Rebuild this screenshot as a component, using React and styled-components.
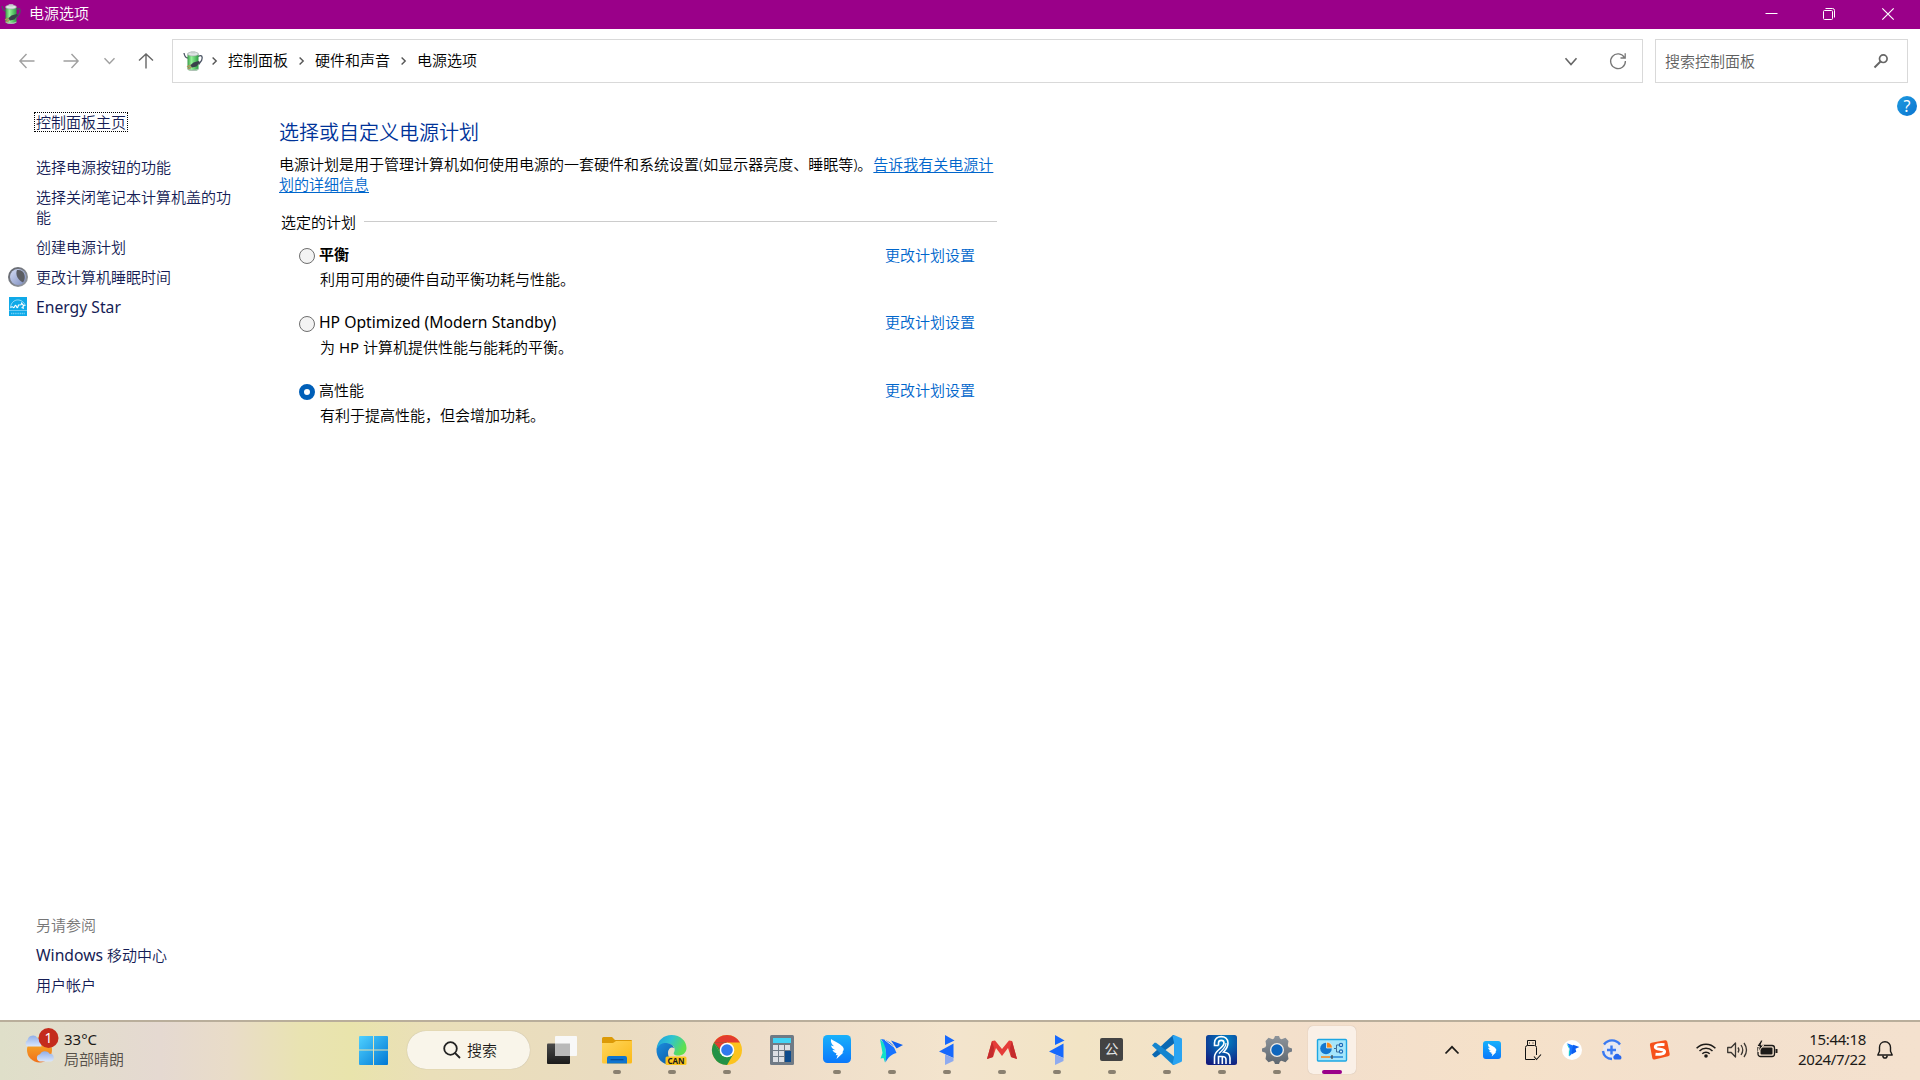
import React from 'react';
import styled, { createGlobalStyle } from 'styled-components';

const GlobalStyle = createGlobalStyle`
  * { box-sizing: border-box; }
  html, body { margin: 0; padding: 0; background: #fff; overflow: hidden; }
  body {
    font-family: "Noto Sans", "Noto Sans CJK SC", sans-serif;
    font-size: 15px;
    font-weight: 350;
    line-height: 20px;
    color: #000;
  }
  svg { display: block; flex: none; overflow: visible; }
`;

const Desktop = styled.div`
  width: 1920px;
  height: 1080px;
  display: flex;
  flex-direction: column;
  background: #fff;
  overflow: hidden;
  white-space: nowrap;
`;

/* ---------- title bar ---------- */
const TitleBar = styled.header`
  height: 29px;
  flex: none;
  display: flex;
  align-items: center;
  padding-left: 1px;
  padding-bottom: 1px;
  background: #9a0089;
  color: #fff;
`;
const TitleText = styled.span`
  margin-left: 8px;
  flex: 1;
  padding-bottom: 2px;
`;
const WindowButton = styled.div`
  width: 58px;
  height: 28px;
  display: flex;
  align-items: center;
  justify-content: center;
`;
const WindowButtons = styled.div`
  display: flex;
  margin-right: 3px;
`;

/* ---------- navigation ---------- */
const NavBar = styled.nav`
  height: 64px;
  flex: none;
  display: flex;
  align-items: center;
  padding: 0 12px 0 19px;
`;
const NavButtons = styled.div`
  width: 153px;
  flex: none;
  display: flex;
  align-items: center;
`;
const NavButton = styled.div`
  width: 16px;
  margin-right: ${(p) => p.$gap}px;
  display: flex;
  justify-content: center;
`;
const AddressBox = styled.div`
  width: 1471px;
  flex: none;
  height: 44px;
  border: 1px solid #d9d9d9;
  display: flex;
  align-items: center;
  padding: 0 16px 0 10px;
`;
const Crumbs = styled.div`
  flex: 1;
  display: flex;
  align-items: center;
  margin-left: 9px;
`;
const Crumb = styled.span`
  margin: 0 11px 2px 11px;
`;
const AddressActions = styled.div`
  display: flex;
  align-items: center;
  gap: 33px;
`;
const SearchBox = styled.div`
  width: 253px;
  flex: none;
  height: 44px;
  margin-left: 12px;
  border: 1px solid #d9d9d9;
  display: flex;
  align-items: center;
  justify-content: space-between;
  padding: 0 19px 0 9px;
  color: #5f5f5f;
`;

/* ---------- body ---------- */
const Body = styled.div`
  flex: 1;
  display: flex;
  min-height: 0;
`;
const Sidebar = styled.aside`
  width: 279px;
  flex: none;
  display: flex;
  flex-direction: column;
  padding: 19px 40px 25px 8px;
  color: #151c55;
`;
const HomeLink = styled.a`
  align-self: flex-start;
  margin: 0 0 25px 26px;
  height: 20px;
  line-height: 18px;
  padding: 0 1px;
  border: 1px dotted #000;
`;
const TaskList = styled.div`
  display: flex;
  flex-direction: column;
  gap: 10px;
`;
const Task = styled.a`
  display: flex;
  align-items: flex-start;
  white-space: normal;
`;
const TaskIcon = styled.span`
  width: 28px;
  height: 20px;
  flex: none;
`;
const TaskText = styled.span`
  flex: none;
  width: 198px;
`;
const Latin = styled.span`
  font-size: ${(p) => p.$size || 15.7}px;
  font-weight: 400;
`;
const SeeAlso = styled.div`
  margin-top: auto;
  padding-left: 28px;
  display: flex;
  flex-direction: column;
  gap: 10px;
`;
const SeeAlsoTitle = styled.span`
  color: #777;
`;
const Main = styled.main`
  width: 719px;
  flex: none;
  padding-top: 26px;
`;
const Heading = styled.h1`
  margin: 0 0 7px;
  font-size: 20px;
  line-height: 28px;
  font-weight: 350;
  color: #003399;
`;
const Intro = styled.p`
  margin: 0;
  white-space: normal;
  word-break: break-all;
`;
const HelpLink = styled.a`
  margin-left: 1px;
  color: #0066cc;
  text-decoration: underline;
  text-underline-offset: 2px;
  text-decoration-thickness: 1px;
`;
const Legend = styled.div`
  display: flex;
  align-items: center;
  margin: 18px 0 12px 2px;
`;
const LegendRule = styled.span`
  flex: 1;
  height: 1px;
  margin: 0 1px 1px 8px;
  background: #cccccc;
`;
const Plan = styled.div`
  display: flex;
  height: 68px;
  padding-left: 20px;
`;
const Radio = styled.span`
  width: 16px;
  height: 16px;
  margin: 4px 4px 0 0;
  flex: none;
  border-radius: 50%;
  border: ${(p) => (p.$checked ? '5px solid #005fb8' : '1px solid #6e6e6e')};
  background: ${(p) => (p.$checked ? '#fff' : '#f3f3f3')};
`;
const PlanText = styled.div`
  flex: 1;
  display: flex;
  flex-direction: column;
  gap: 5px;
`;
const PlanName = styled.span`
  height: 20px;
  font-weight: ${(p) => (p.$bold ? 700 : 350)};
`;
const PlanDescription = styled.span`
  padding-left: 1px;
`;
const PlanLink = styled.a`
  margin-right: 23px;
  padding-top: ${(p) => (p.$bold ? 1 : 0)}px;
  color: #0066cc;
`;
const HelpArea = styled.div`
  flex: 1;
  display: flex;
  justify-content: flex-end;
  padding: 3px 3px 0 0;
`;
const HelpBadge = styled.span`
  width: 20px;
  height: 20px;
  border-radius: 50%;
  background: linear-gradient(135deg, #1e9be0, #0a74d0);
  color: #fff;
  text-align: center;
  font-size: 16px;
  font-weight: 400;
  line-height: 20px;
`;

/* ---------- taskbar ---------- */
const Taskbar = styled.footer`
  height: 60px;
  flex: none;
  display: flex;
  align-items: center;
  border-top: 2px solid #b9ae9b;
  background: linear-gradient(90deg, #dfdfc9 0, #e3dccd 90px, #e5d9d1 160px, #e9dcc8 230px,
    #e9e3b2 300px, #e9e4ac 350px, #eadfb9 430px, #eadcc0 600px, #eeddc9 760px, #f3e4cd 950px,
    #f2e4c5 1080px, #f3e2c9 1200px, #f3dfcc 1330px, #f5e1c9 1500px, #f3e0cd 1700px, #f4e1ce 1920px);
  color: #1c1a18;
`;
const Weather = styled.div`
  width: 346px;
  padding: 0 0 4px 24px;
  display: flex;
  align-items: center;
`;
const WeatherText = styled.div`
  display: flex;
  flex-direction: column;
  margin-left: 9px;
  color: #554f48;
`;
const Temperature = styled.span`
  color: #1c1a18;
  font-weight: 400;
`;
const AppButton = styled.div`
  width: 55px;
  height: 58px;
  display: flex;
  flex-direction: column;
  align-items: center;
`;
const AppTile = styled.div`
  width: 48px;
  height: 48px;
  margin-top: 4px;
  border-radius: 5px;
  display: flex;
  flex-direction: column;
  align-items: center;
  justify-content: space-between;
  padding-top: 9px;
  background: ${(p) => (p.$active ? '#faf0e7' : 'transparent')};
  box-shadow: ${(p) => (p.$active ? '0 0 1px rgba(0,0,0,.25)' : 'none')};
`;
const Indicator = styled.span`
  width: ${(p) => (p.$active ? 20 : 8)}px;
  height: 4px;
  border-radius: 2px;
  background: ${(p) => (p.$active ? '#9a0089' : p.$open ? '#8a8070' : 'transparent')};
`;
const SearchPill = styled.div`
  width: 123px;
  height: 38px;
  margin: 0 4px 2px 6px;
  border-radius: 19px;
  background: #f9f5ea;
  box-shadow: 0 0 1px rgba(0, 0, 0, 0.25);
  display: flex;
  align-items: center;
  justify-content: center;
  gap: 6px;
  padding-left: 3px;
`;
const Tray = styled.div`
  margin-left: auto;
  display: flex;
  align-items: center;
  padding: 0 27px 2px 0;
`;
const TraySlot = styled.span`
  width: ${(p) => p.$w}px;
  display: flex;
  justify-content: center;
`;
const Clock = styled.div`
  width: 78px;
  display: flex;
  flex-direction: column;
  align-items: flex-end;
  margin-right: 11px;
  padding-bottom: 2px;
  font-weight: 400;
  letter-spacing: -0.35px;
`;

/* ---------- small icons ---------- */
const PowerIcon = ({ id }) => (
  <svg width="20" height="20" viewBox="0 0 20 20">
    <defs>
      <linearGradient id={id} x1="0" x2="1">
        <stop offset="0" stopColor="#3a9a48" />
        <stop offset=".35" stopColor="#93f396" />
        <stop offset="1" stopColor="#2c9c42" />
      </linearGradient>
    </defs>
    <path d="M15 5.500c4-2 5 0 3.600 4l-3 4M5 7C2.500 7 1.500 5 1 2" fill="none" stroke="#4c5564" strokeWidth="1.300" />
    <rect x="4.500" y="2" width="11" height="17.500" rx="2" fill={`url(#${id})`} />
    <ellipse cx="10" cy="3" rx="5.500" ry="2" fill="#dfe5e4" stroke="#96a19d" strokeWidth=".6" />
    <rect x="7.500" y=".3" width="5" height="2.200" rx="1" fill="#c6cecb" />
    <path d="M4.500 17.500q5.500 2.500 11 0v1q-5.500 3-11 0z" fill="#aebdb5" />
    <path d="M7 14.500l3.500-3 5-1.500 1.500 1-3.500 4.500-4.500 1z" fill="#39404a" />
    <path d="M4 15.800l3.500-1.600M5 17.800l3.500-1.600" stroke="#b3925b" strokeWidth="1.300" />
  </svg>
);

const Arrow = ({ rotate = 0, color }) => (
  <svg width="16" height="16" viewBox="0 0 16 16" fill="none" stroke={color} strokeWidth="1.400">
    <path transform={`rotate(${rotate} 8 8)`} d="M15.500 8H1M7.500 1L.9 8l6.600 7" />
  </svg>
);
const Chevron = ({ w = 12, h = 6, color = '#555', sw = 1.400, up = false }) => (
  <svg width={w} height={h} viewBox={`0 0 ${w} ${h}`} fill="none" stroke={color} strokeWidth={sw}>
    <path d={up ? `M.5 ${h - 0.5}L${w / 2} .8L${w - 0.5} ${h - 0.5}` : `M.5 .3L${w / 2} ${h - 0.5}L${w - 0.5} .3`} />
  </svg>
);
const CrumbChevron = () => (
  <svg width="5" height="8" viewBox="0 0 5 8" fill="none" stroke="#555" strokeWidth="1.400">
    <path d="M.6 .5L4.200 4L.6 7.500" />
  </svg>
);

const Moon = () => (
  <svg width="20" height="20" viewBox="0 0 20 20">
    <defs>
      <linearGradient id="moonRing" x1="0" y1="0" x2="1" y2="1">
        <stop offset="0" stopColor="#5c5f66" />
        <stop offset="1" stopColor="#9ba0a8" />
      </linearGradient>
      <linearGradient id="moonFace" x1="0" y1="0" x2="1" y2="1">
        <stop offset="0" stopColor="#d4dcf3" />
        <stop offset="1" stopColor="#7c8cc0" />
      </linearGradient>
    </defs>
    <circle cx="10" cy="10" r="10" fill="url(#moonRing)" />
    <circle cx="10" cy="10" r="8" fill="url(#moonFace)" />
    <path d="M9 3C7 8 10 13 15 15.500 18.500 11 17 2 9 3z" fill="#5b5d63" />
  </svg>
);
const EnergyStarBox = styled.svg`
  margin-left: 1px;
`;
const EnergyStar = () => (
  <EnergyStarBox width="18" height="19" viewBox="0 0 18 19">
    <rect width="18" height="19" fill="#0fa9e8" />
    <path d="M1.500 10C3 .8 14 .8 16.500 9" fill="none" stroke="#b4e5fa" strokeWidth=".8" />
    <path d="M1.500 11q1.500-2 2.500-.8t1.800-1 1.700.5 2-1.700l2.500-.3.800-1.700.8 1.700 1.700.5-1.300 1.300.3 1.700-1.800-.8" fill="none" stroke="#fff" strokeWidth="1.100" />
    <path d="M0 13.500h18" stroke="#a9e2fa" strokeWidth=".6" />
    <path d="M2 16.500h14" stroke="#6fd0f6" strokeWidth="1.300" strokeDasharray="1.200 .6" />
  </EnergyStarBox>
);

/* ---------- taskbar icons ---------- */
const WeatherIcon = () => (
  <svg width="31" height="31" viewBox="0 0 31 31">
    <defs>
      <linearGradient id="sun" x1="0" y1="0" x2="0" y2="1">
        <stop offset="0" stopColor="#f7b52c" />
        <stop offset="1" stopColor="#f0701a" />
      </linearGradient>
      <linearGradient id="cloud" x1="0" y1="0" x2="0" y2="1">
        <stop offset="0" stopColor="#8faee8" />
        <stop offset="1" stopColor="#dbe7fb" />
      </linearGradient>
    </defs>
    <circle cx="15.500" cy="16" r="12.500" fill="url(#sun)" />
    <path d="M3.500 12.500a3.400 3.400 0 0 1 0-6.200A5.500 5.500 0 0 1 13.500 4q4 .5 4 8.500z" fill="url(#cloud)" />
    <path d="M16 27.500a3.700 3.700 0 0 1 0-7.300 5.500 5.500 0 0 1 9.500-.5 4 4 0 0 1 1.500 7.800z" fill="url(#cloud)" />
    <circle cx="24.500" cy="4" r="10" fill="#c42b1c" />
    <text x="24.500" y="9" textAnchor="middle" fontSize="14" fontWeight="400" fill="#fff">1</text>
  </svg>
);
const WindowsLogo = () => (
  <svg width="29" height="30" viewBox="0 0 29 30">
    <defs>
      <linearGradient id="win" x1="0" y1="0" x2="1" y2="1">
        <stop offset="0" stopColor="#4fd1ff" />
        <stop offset="1" stopColor="#0078d4" />
      </linearGradient>
    </defs>
    <path d="M1 1h13v13.500H0V2a1 1 0 0 1 1-1zM15 1h13a1 1 0 0 1 1 1v12.500H15zM0 15.500h14V30H1a1 1 0 0 1-1-1zM15 15.500h14V29a1 1 0 0 1-1 1H15z" fill="url(#win)" />
  </svg>
);
const TaskViewIcon = () => (
  <svg width="30" height="30" viewBox="0 0 30 30">
    <defs>
      <linearGradient id="tvDark" x1="0" y1="0" x2="0" y2="1">
        <stop offset="0" stopColor="#4a4a4a" /><stop offset="1" stopColor="#1b1b1b" />
      </linearGradient>
    </defs>
    <rect x="0" y="8.500" width="23" height="20.500" rx="1" fill="url(#tvDark)" />
    <rect x="8" y="1" width="22" height="20" rx="1" fill="#f8f8f8" />
    <path d="M8 8.500h15V21H9a1 1 0 0 1-1-1z" fill="#b9b9b9" />
  </svg>
);
const FolderIcon = () => (
  <svg width="30" height="30" viewBox="0 0 30 30">
    <defs>
      <linearGradient id="fold" x1="0" y1="0" x2="1" y2="1">
        <stop offset="0" stopColor="#ffd65c" /><stop offset="1" stopColor="#fbb917" />
      </linearGradient>
    </defs>
    <path d="M0 3.500A1.500 1.500 0 0 1 1.500 2H10l3 3h16a1 1 0 0 1 1 1v5H0z" fill="#dc9a07" />
    <path d="M0 8h11l3-2h16v21a1.500 1.500 0 0 1-1.500 1.500h-27A1.500 1.500 0 0 1 0 27z" fill="url(#fold)" />
    <path d="M5 28.500V23a2 2 0 0 1 2-2h16a2 2 0 0 1 2 2v5.500z" fill="#0f74cf" />
    <path d="M8.500 24.700h13" stroke="#0a4a94" strokeWidth="1.200" />
  </svg>
);
const EdgeIcon = () => (
  <svg width="31" height="30" viewBox="0 0 31 30">
    <defs>
      <linearGradient id="edgeTop" x1="0" y1="0" x2="1" y2=".4">
        <stop offset="0" stopColor="#1d9be0" /><stop offset=".5" stopColor="#2fc3d0" /><stop offset="1" stopColor="#5fe04e" />
      </linearGradient>
      <linearGradient id="edgeLow" x1="0" y1="0" x2="1" y2="1">
        <stop offset="0" stopColor="#1a8ddd" /><stop offset="1" stopColor="#0c4f9c" />
      </linearGradient>
    </defs>
    <path d="M.5 14C1.500 5 8 0 15.500 0 24.500 0 30.500 6 30.500 13c0 5-4 7.500-8.500 7.500-3.500 0-5-1.500-4-3 2.500-4.500-1.500-9-7-9-4.500 0-8 2-10.500 5.500z" fill="url(#edgeTop)" />
    <path d="M.5 14C3 9 7 7.700 10.500 8c4.500.3 7 3 7.500 5-2-1.500-6 0-6 5 0 7 7 10 13.500 7.500C23 29 19 30 15.500 30 6 30 0 23 .5 14z" fill="url(#edgeLow)" />
    <rect x="9.500" y="21.500" width="21" height="8.500" rx="1.500" fill="#fbc51d" />
    <text x="20" y="28.600" textAnchor="middle" fontSize="8" fontWeight="700" fill="#1b1b1b">CAN</text>
  </svg>
);
const ChromeIcon = () => (
  <svg width="30" height="30" viewBox="0 0 30 30">
    <circle cx="15" cy="15" r="15" fill="#fcc31e" />
    <path d="M15 15L2 7.500A15 15 0 0 1 28 7.500H15z" fill="#e33b2e" />
    <path d="M2 7.500A15 15 0 0 0 15 30l6.500-11.300L8.500 18.700z" fill="#239246" />
    <path d="M2 7.500L8.500 18.700 15 7.500z" fill="#239246" />
    <path d="M2 7.500L8.500 15 15 7.500z" fill="#e33b2e" />
    <circle cx="15" cy="15" r="7.300" fill="#fff" />
    <circle cx="15" cy="15" r="5.800" fill="#3079ee" />
  </svg>
);
const CalcIcon = () => (
  <svg width="24" height="30" viewBox="0 0 24 30">
    <rect width="24" height="30" rx="1.500" fill="#6f7a85" />
    <rect x="3" y="3" width="18" height="5" fill="#41d3f5" />
    {[10, 16, 22].map((y) => [3, 9, 15].map((x) => (
      <rect key={`${x}-${y}`} x={x} y={y} width="5" height="5" fill="#dcdfe4" />
    )))}
    <rect x="15" y="16" width="6" height="11" fill="#0c4a8c" />
  </svg>
);
const DingTalk = ({ size, id }) => (
  <svg width={size} height={size} viewBox="0 0 28 28">
    <defs>
      <linearGradient id={id} x1="0" y1="0" x2="0" y2="1">
        <stop offset="0" stopColor="#18b1fb" /><stop offset="1" stopColor="#0a78fb" />
      </linearGradient>
    </defs>
    <rect width="28" height="28" rx="4.500" fill={`url(#${id})`} />
    <path d="M8 4C13 7.500 18.500 9 20.500 13c.7 1.500-.3 3-1.300 4.500h1.300L13.500 24l1.200-4-2 .2.800-2C11.500 18 10 16.500 9.500 15l3 .3C9.500 14 8.500 12.500 8 10.500l3 .8C8.500 9.500 7.500 7 8 4z" fill="#fff" />
  </svg>
);
const BirdShape = () => (
  <>
    <path d="M0 3.500l4.500 4.800L4 26l4-2.500L5 14z" fill="#12dbc8" />
    <path d="M1 3l12 4.500L10 21 5 27C7.500 18 6 10 1 3z" fill="#1673ff" />
    <path d="M12 6l11 4-7 3 1.500 5.500L9 23l1-9z" fill="#0d5ff0" />
  </>
);
const BirdIcon = () => (
  <svg width="23" height="30" viewBox="0 0 23 30">
    <path d="M0 4l5 5 1.500 14-1.500 4.500-1.500-4.500-3 .5L2.500 18z" fill="#12e0c8" />
    <path d="M1 4c4 .5 8 2 12 6l3.500 8c-5 1-8.500 4.500-11 9.500C7 19 6 10 1 4z" fill="#1673ff" />
    <path d="M11 5.500L23 10l-6.500 3.500z" fill="#0d5ff0" />
    <path d="M5 5l11.500 9" fill="none" stroke="#f1e1cc" strokeWidth="1" />
  </svg>
);
const FlagIcon = () => (
  <svg width="15" height="30" viewBox="0 0 15 30">
    <path d="M6 0l9.500 5.500L6 10z" fill="#1568fd" />
    <path d="M14.500 8.500V23L0 16.500z" fill="#1568fd" />
    <path d="M6 19.500l8.500 3.500v3L6 30z" fill="#8fabef" />
  </svg>
);
const MIcon = () => (
  <svg width="30" height="30" viewBox="0 0 30 30">
    <path d="M0 24L5 6l3-.5 7 8.500 7-8.500 3 .5 5 18-6-2-3-9-6 8-6-8-3 9z" fill="#e53c39" />
    <path d="M0 24l5-18 2 7-1 9zM30 24L25 6l-2 7 1 9z" fill="#c42b2c" />
  </svg>
);
const GongTile = styled.span`
  width: 23px;
  height: 23px;
  margin: 3px 0 4px;
  border-radius: 2px;
  background: #434343;
  color: #e4e4e4;
  font-size: 14px;
  font-weight: 400;
  line-height: 22px;
  text-align: center;
`;
const VsCodeIcon = () => (
  <svg width="30" height="30" viewBox="0 0 30 30">
    <path d="M0 19.500l2.500 2.700h1.500L22 8.500V0h-1z" fill="#0a68b2" />
    <path d="M0 10.500l2.500-2.700h1.500L22 21.500V30h-1z" fill="#1485cf" />
    <path d="M22 0l7 3a1.500 1.500 0 0 1 1 1.500v21a1.500 1.500 0 0 1-1 1.500l-7 3-1.500-1 1.500-6.500v-15L20.500 1z" fill="#2aa4f2" />
  </svg>
);
const BlueAppIcon = () => (
  <svg width="31" height="30" viewBox="0 0 31 30">
    <defs>
      <radialGradient id="nav" cx=".6" cy=".2" r=".9">
        <stop offset="0" stopColor="#0086c9" /><stop offset="1" stopColor="#131b7d" />
      </radialGradient>
    </defs>
    <rect width="31" height="30" rx="2.500" fill="url(#nav)" />
    <g fill="none" stroke="#fff" strokeWidth="1.600">
      <path d="M12.500 10.500H8.500V8c0-8.500 13.500-8.500 13.500 0 0 4-1.500 6-4.500 9 4.500.5 6.500 2.500 6.500 6v6" />
      <path d="M12.500 10.500V8c0-3.500 5.500-3.500 5.500 0 0 5-9.500 7-9.500 14v7" />
      <path d="M20 8c0 5-4 7-7 10.500" strokeWidth="1.200" />
      <path d="M12.500 29v-7.500h3.500c3 0 4 1 4 3V29M16.300 29v-7" />
    </g>
  </svg>
);
const GearIcon = () => (
  <svg width="30" height="30" viewBox="0 0 30 30">
    <defs>
      <linearGradient id="gear" x1="0" y1="0" x2="0" y2="1">
        <stop offset="0" stopColor="#8d949b" /><stop offset="1" stopColor="#5f676f" />
      </linearGradient>
    </defs>
    <path d="M6.500 2.800l4 1.500 1.500-.8L13 1h4l1 2.500 1.500.8 4-1.500L26.500 6l-.7 4.300.8 1.900L30 13.500v3l-3.400 1.300-.8 1.900.7 4.300-3 3.200-4-1.500-1.500.8L17 29h-4l-1-2.500-1.500-.8-4 1.500L3.500 24l.7-4.300-.8-1.900L0 16.500v-3l3.400-1.300.8-1.900L3.500 6z" fill="url(#gear)" />
    <circle cx="15" cy="15" r="7" fill="#f3eee8" />
    <circle cx="15" cy="15" r="5.700" fill="#0f66bd" />
  </svg>
);
const ControlPanelIcon = () => (
  <svg width="30" height="30" viewBox="0 0 30 30">
    <rect x=".5" y="4.500" width="29" height="21.500" rx="1" fill="#a5e6fb" stroke="#1da6e3" strokeWidth="1.400" />
    <circle cx="9" cy="13.500" r="5.800" fill="#1377cf" />
    <path d="M9.500 13V7a6 6 0 0 1 6 6z" fill="#f58a1d" stroke="#d8f4fd" strokeWidth=".8" />
    <path d="M17 13.500h2.500v-3.500H22M19.500 13.500V17H22" fill="none" stroke="#3d6f9a" strokeWidth="1" />
    <circle cx="24" cy="10" r="1.600" fill="#d8f4fd" stroke="#1b69b8" strokeWidth="1.200" />
    <circle cx="24" cy="16.500" r="1.600" fill="#d8f4fd" stroke="#1b69b8" strokeWidth="1.200" />
    <path d="M4 22h9" stroke="#f58a1d" strokeWidth="1.600" />
    <path d="M13 22h13" stroke="#1377cf" strokeWidth="1.300" />
    <path d="M15 20v4" stroke="#444" strokeWidth="1.200" />
  </svg>
);

const apps = [
  { icon: <TaskViewIcon />, open: false },
  { icon: <FolderIcon />, open: true },
  { icon: <EdgeIcon />, open: true },
  { icon: <ChromeIcon />, open: true },
  { icon: <CalcIcon />, open: false },
  { icon: <DingTalk size={28} id="dingApp" />, open: true },
  { icon: <BirdIcon />, open: true },
  { icon: <FlagIcon />, open: true },
  { icon: <MIcon />, open: true },
  { icon: <FlagIcon />, open: true },
  { icon: <GongTile>公</GongTile>, open: true },
  { icon: <VsCodeIcon />, open: true },
  { icon: <BlueAppIcon />, open: true },
  { icon: <GearIcon />, open: true },
  { icon: <ControlPanelIcon />, open: true, active: true },
];

const plans = [
  { name: '平衡', description: '利用可用的硬件自动平衡功耗与性能。', bold: true },
  {
    name: <Latin>HP Optimized (Modern Standby)</Latin>,
    description: <>为 <Latin $size={15}>HP</Latin> 计算机提供性能与能耗的平衡。</>,
  },
  { name: '高性能', description: '有利于提高性能，但会增加功耗。', checked: true },
];

const tasks = [
  { text: '选择电源按钮的功能' },
  { text: '选择关闭笔记本计算机盖的功能' },
  { text: '创建电源计划' },
  { text: '更改计算机睡眠时间', icon: <Moon /> },
  { text: <Latin>Energy Star</Latin>, icon: <EnergyStar /> },
];

const UsbIcon = () => (
  <svg width="16" height="20" viewBox="0 0 16 20" fill="none" stroke="#111">
    <path d="M2.500 5.500V.5h8v5M11.500 15V7.500a2 2 0 0 0-2-2H2.500a2 2 0 0 0-2 2v12H10" />
    <path d="M4 3h1M7.500 3h1" />
    <path d="M9 16.500l2.500 3 4.500-5" strokeWidth="1.100" />
  </svg>
);
const BirdBadge = () => (
  <svg width="20" height="20" viewBox="0 0 20 20">
    <circle cx="10" cy="10" r="10" fill="#fff" />
    <g transform="translate(4.500 1.500) scale(.56)"><BirdShape /></g>
  </svg>
);
const PlusBadge = () => (
  <svg width="20" height="20" viewBox="0 0 20 20">
    <circle cx="10" cy="10" r="9" fill="#e8e9f2" />
    <path d="M2 4.500C6-1 14-1 18 4.500M1 11c.5 4.500 4 7.800 9 8" fill="none" stroke="#3a7af2" strokeWidth="2.400" />
    <path d="M9.500 5.500v9M5 10h9" stroke="#3a7af2" strokeWidth="2.400" />
    <path d="M12.500 19.500a2.500 2.500 0 0 1 0-4.300 3 3 0 0 1 5 0 2.400 2.400 0 0 1 1 4.300z" fill="#2867ec" />
  </svg>
);
const SogouIcon = () => (
  <svg width="21" height="20" viewBox="0 0 21 20">
    <path d="M2.500 2.800L16 .2a2 2 0 0 1 2.300 1.500L20.700 14a2 2 0 0 1-1.600 2.300L5.600 19.500a2 2 0 0 1-2.300-1.600L.9 5.100a2 2 0 0 1 1.600-2.300z" fill="#f6511b" />
    <path d="M15.500 4.600C9.500 4 6 5.300 6.300 7.400c.4 2.700 9 1 9.300 3.900.2 2.300-4 3.500-9.100 2.900" fill="none" stroke="#fff" strokeWidth="2.900" />
  </svg>
);
const WifiIcon = () => (
  <svg width="20" height="16" viewBox="0 0 20 16" fill="none" stroke="#1c1a18" strokeWidth="1.500">
    <path d="M.6 6.200a13 13 0 0 1 18.800 0" />
    <path d="M3.500 9a9.200 9.200 0 0 1 13 0" />
    <path d="M6.300 11.700a5.300 5.300 0 0 1 7.400 0" />
    <circle cx="10" cy="14" r="1.800" fill="#1c1a18" stroke="none" />
  </svg>
);
const SpeakerIcon = () => (
  <svg width="21" height="16" viewBox="0 0 21 16" fill="none" stroke="#3b3733" strokeWidth="1.300">
    <path d="M.7 5.500h3.500L8.500 1v14l-4.300-4.500H.7z" strokeLinejoin="round" />
    <path d="M11 5.500q1.800 2.500 0 5M14 3q3.500 5 0 10M17 1q5 7 0 14" />
  </svg>
);
const BatteryIcon = () => (
  <svg width="21" height="17" viewBox="0 0 21 17">
    <rect x="1" y="3.500" width="16.500" height="11" rx="2.500" fill="none" stroke="#1c1a18" strokeWidth="1.300" />
    <rect x="3.500" y="5.500" width="12" height="7" rx="1" fill="#1c1a18" />
    <path d="M18.500 7h2v4h-2z" fill="#1c1a18" />
    <path d="M4-2L-.3 4.500h2.600L1 10l5.700-7H4L6-2z" fill="#1c1a18" stroke="#f4e1ce" strokeWidth="1" />
  </svg>
);
const BellIcon = () => (
  <svg width="16" height="18" viewBox="0 0 16 18" fill="none" stroke="#1c1a18" strokeWidth="1.400">
    <path d="M8 .8c-3.400 0-5.500 2.500-5.500 5.500v4L.8 14h14.400l-1.700-3.700v-4C13.500 3.300 11.400.8 8 .8z" strokeLinejoin="round" />
    <path d="M5.700 14.500q.5 2.600 2.300 2.600t2.300-2.600" />
  </svg>
);

export default function App() {
  return (
    <Desktop>
      <GlobalStyle />
      <TitleBar>
        <PowerIcon id="pwTitle" />
        <TitleText>电源选项</TitleText>
        <WindowButtons>
          <WindowButton>
            <svg width="12" height="12" viewBox="0 0 12 12"><path d="M-.5 5.500h12" stroke="#fff" /></svg>
          </WindowButton>
          <WindowButton>
            <svg width="12" height="12" viewBox="0 0 12 12" fill="none" stroke="#fff">
              <rect x="-.5" y="2.500" width="9" height="9" rx="1" />
              <path d="M1.500 .5H8.500a2 2 0 0 1 2 2V9.500" />
            </svg>
          </WindowButton>
          <WindowButton>
            <svg width="12" height="12" viewBox="0 0 12 12" stroke="#fff" strokeWidth="1.200"><path d="M.3 .3l11.400 11.400M11.700 .3L.3 11.700" /></svg>
          </WindowButton>
        </WindowButtons>
      </TitleBar>

      <NavBar>
        <NavButtons>
          <NavButton $gap={28}><Arrow color="#a0a0a0" /></NavButton>
          <NavButton $gap={22}><Arrow color="#a0a0a0" rotate={180} /></NavButton>
          <NavButton $gap={21}><Chevron w={11} h={6} color="#a0a0a0" /></NavButton>
          <NavButton $gap={0}><Arrow color="#666" rotate={90} /></NavButton>
        </NavButtons>
        <AddressBox>
          <PowerIcon id="pwNav" />
          <Crumbs>
            <CrumbChevron /><Crumb>控制面板</Crumb>
            <CrumbChevron /><Crumb>硬件和声音</Crumb>
            <CrumbChevron /><Crumb>电源选项</Crumb>
          </Crumbs>
          <AddressActions>
            <Chevron w={12} h={7} color="#666" sw={1.600} />
            <svg width="16" height="16" viewBox="0 0 16 16" fill="none" stroke="#777" strokeWidth="1.300">
              <path d="M14.500 4.700A7.400 7.400 0 1 0 15.400 8M15.200 .3v4.700h-4.700" />
            </svg>
          </AddressActions>
        </AddressBox>
        <SearchBox>
          <span>搜索控制面板</span>
          <svg width="14" height="14" viewBox="0 0 14 14" fill="none" stroke="#666">
            <circle cx="9.300" cy="4.700" r="3.800" strokeWidth="1.700" />
            <path d="M6.500 7.500L.5 13.500" strokeWidth="2" />
          </svg>
        </SearchBox>
      </NavBar>

      <Body>
        <Sidebar>
          <HomeLink>控制面板主页</HomeLink>
          <TaskList>
            {tasks.map((t, i) => (
              <Task key={i}>
                <TaskIcon>{t.icon}</TaskIcon>
                <TaskText>{t.text}</TaskText>
              </Task>
            ))}
          </TaskList>
          <SeeAlso>
            <SeeAlsoTitle>另请参阅</SeeAlsoTitle>
            <a><Latin>Windows </Latin>移动中心</a>
            <a>用户帐户</a>
          </SeeAlso>
        </Sidebar>
        <Main>
          <Heading>选择或自定义电源计划</Heading>
          <Intro>
            电源计划是用于管理计算机如何使用电源的一套硬件和系统设置(如显示器亮度、睡眠等)。<HelpLink>告诉我有关电源计划的详细信息</HelpLink>
          </Intro>
          <Legend>选定的计划<LegendRule /></Legend>
          {plans.map((p, i) => (
            <Plan key={i}>
              <Radio $checked={p.checked} />
              <PlanText>
                <PlanName $bold={p.bold}>{p.name}</PlanName>
                <PlanDescription>{p.description}</PlanDescription>
              </PlanText>
              <PlanLink $bold={p.bold}>更改计划设置</PlanLink>
            </Plan>
          ))}
        </Main>
        <HelpArea><HelpBadge>?</HelpBadge></HelpArea>
      </Body>

      <Taskbar>
        <Weather>
          <WeatherIcon />
          <WeatherText><Temperature>33°C</Temperature><span>局部晴朗</span></WeatherText>
        </Weather>
        <AppButton><AppTile><WindowsLogo /><Indicator /></AppTile></AppButton>
        <SearchPill>
          <svg width="18" height="18" viewBox="0 0 18 18" fill="none" stroke="#222" strokeWidth="1.800">
            <circle cx="7.500" cy="7.500" r="6.300" /><path d="M12 12l5 5" />
          </svg>
          <span>搜索</span>
        </SearchPill>
        {apps.map((a, i) => (
          <AppButton key={i}>
            <AppTile $active={a.active}>
              {a.icon}
              <Indicator $open={a.open} $active={a.active} />
            </AppTile>
          </AppButton>
        ))}
        <Tray>
          <TraySlot $w={40}><Chevron w={14} h={8} color="#1c1a18" sw={1.700} up /></TraySlot>
          <TraySlot $w={40}><DingTalk size={18} id="dingTray" /></TraySlot>
          <TraySlot $w={42}><UsbIcon /></TraySlot>
          <TraySlot $w={36}><BirdBadge /></TraySlot>
          <TraySlot $w={44}><PlusBadge /></TraySlot>
          <TraySlot $w={50}><SogouIcon /></TraySlot>
          <TraySlot $w={44}><WifiIcon /></TraySlot>
          <TraySlot $w={18}><SpeakerIcon /></TraySlot>
          <TraySlot $w={42}><BatteryIcon /></TraySlot>
          <Clock><span>15:44:18</span><span>2024/7/22</span></Clock>
          <BellIcon />
        </Tray>
      </Taskbar>
    </Desktop>
  );
}
